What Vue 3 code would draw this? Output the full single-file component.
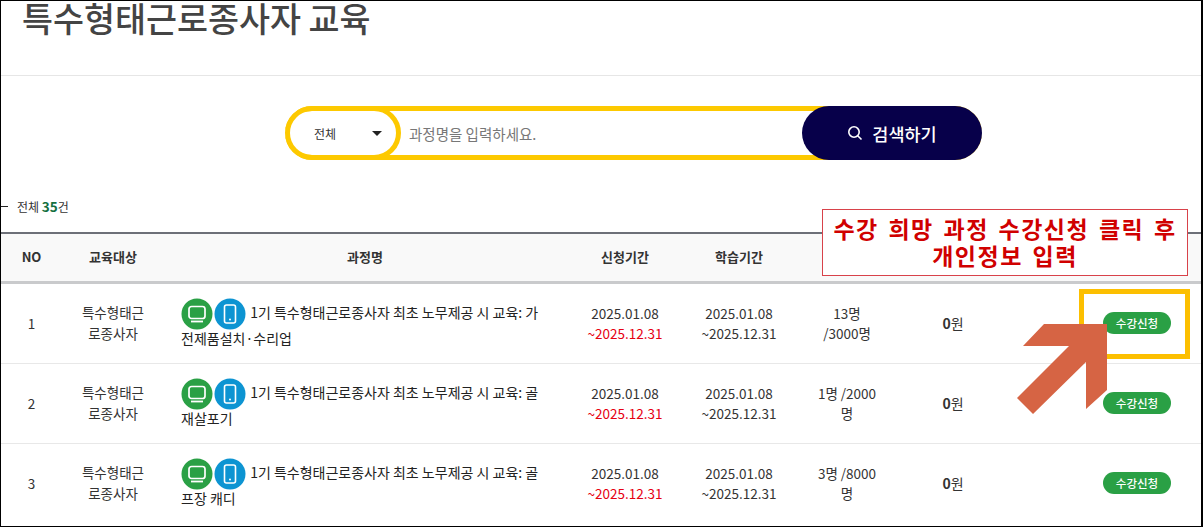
<script setup>
const rows = [
  { no: 1, title: '1기 특수형태근로종사자 최초 노무제공 시 교육: 가전제품설치·수리업', people: ['13명', '/3000명'] },
  { no: 2, title: '1기 특수형태근로종사자 최초 노무제공 시 교육: 골재살포기', people: ['1명 /2000', '명'] },
  { no: 3, title: '1기 특수형태근로종사자 최초 노무제공 시 교육: 골프장 캐디', people: ['3명 /8000', '명'] }
]
</script>

<template>
  <div class="page">
    <header class="head"><h1>특수형태근로종사자 교육</h1></header>

    <div class="search">
      <div class="bar">
        <div class="select"><span>전체</span><i class="caret"></i></div>
        <span class="ph">과정명을 입력하세요.</span>
        <div class="btn">
          <svg width="16" height="16" viewBox="0 0 16 16" fill="none" stroke="#fff" stroke-width="1.6"><circle cx="7" cy="7" r="5.2"/><path d="M10.7 10.7 14.5 14.5"/></svg>
          <span>검색하기</span>
        </div>
      </div>
    </div>

    <div class="count"><i class="dash"></i><span>전체 <b>35</b>건</span></div>

    <div class="table">
      <div class="row th">
        <div>NO</div><div>교육대상</div><div>과정명</div><div>신청기간</div><div>학습기간</div><div></div><div></div><div></div>
      </div>
      <div v-for="r in rows" :key="r.no" class="row td">
        <div>{{ r.no }}</div>
        <div class="target">특수형태근로종사자</div>
        <div class="title">
          <svg class="ico" width="32" height="32" viewBox="0 0 32 32"><circle cx="16" cy="16" r="15.5" fill="#2aa045"/><rect x="8" y="8.5" width="16" height="12" rx="2.5" fill="none" stroke="#fff" stroke-width="1.7"/><path d="M10 23.5h12" stroke="#fff" stroke-width="1.8"/></svg>
          <svg class="ico" width="32" height="32" viewBox="0 0 32 32"><circle cx="16" cy="16" r="15.5" fill="#0d94d2"/><rect x="10.5" y="7" width="11" height="18" rx="2" fill="none" stroke="#fff" stroke-width="1.6"/><circle cx="16" cy="21.6" r="1" fill="#fff"/></svg>
          {{ r.title }}
        </div>
        <div>2025.01.08<br><span class="red">~2025.12.31</span></div>
        <div>2025.01.08<br>~2025.12.31</div>
        <div class="people">{{ r.people[0] }}<br>{{ r.people[1] }}</div>
        <div class="fee"><b>0</b>원</div>
        <div class="apply"><span class="pill">수강신청</span></div>
      </div>
    </div>

    <div class="note">수강 희망 과정 수강신청 클릭 후<br>개인정보 입력</div>
    <div class="mark"></div>
    <svg class="arrow" width="90" height="90" viewBox="0 0 90 90"><path d="M27 0H90V66L69 85V38L16 90 0 74 52 22H6Z" fill="#d66444"/></svg>
  </div>
</template>

<style>
html, body { margin: 0; background: #fff; }
</style>

<style scoped>
.page {
  position: relative;
  box-sizing: border-box;
  width: 1203px;
  height: 527px;
  overflow: hidden;
  background: #fff;
  border: solid #000;
  border-width: 1px 2px 1px 1px;
  font-family: "Noto Sans CJK KR", "Noto Sans", sans-serif;
  color: #333;
}
.head {
  height: 74px;
  border-bottom: 1px solid #e6e6e6;
  padding-left: 21px;
}
h1 {
  margin: 0;
  font-size: 33.7px;
  line-height: 34px;
  font-weight: 500;
  color: #444;
}
.search { display: flex; padding: 30px 0 0 284px; height: 60px; }
.bar {
  box-sizing: border-box;
  position: relative;
  display: flex;
  align-items: center;
  width: 697px;
  height: 54px;
  border: 5px solid #fdc900;
  border-left: 0;
  border-right: 0;
  border-radius: 27px;
}
.select {
  box-sizing: border-box;
  display: flex;
  align-items: center;
  justify-content: space-between;
  flex: none;
  width: 116px;
  height: 54px;
  margin: -5px 0;
  padding: 0 14px 0 24px;
  font-size: 12px;
  color: #333;
  border: 5px solid #fdc900;
  border-radius: 27px;
}
.caret {
  width: 0; height: 0;
  border: 5px solid transparent;
  border-top: 5px solid #222;
  border-bottom: 0;
}
.ph { margin-left: 8px; font-size: 14.5px; color: #777; }
.btn {
  position: absolute;
  right: 0;
  top: -5px;
  box-sizing: border-box;
  display: flex;
  align-items: center;
  justify-content: center;
  gap: 9px;
  width: 180px;
  height: 54px;
  border-radius: 27px;
  background: #07004a;
  color: #fff;
  font-size: 17.5px;
  font-weight: 500;
}
.count {
  display: flex;
  align-items: center;
  gap: 9px;
  height: 20px;
  margin-top: 30px;
  font-size: 12px;
  color: #333;
}
.count b { font-size: 13.5px; color: #14703f; font-weight: 700; }
.dash { width: 7px; height: 1px; background: #222; }
.table { margin-top: 16px; border-top: 2px solid #6d7078; }
.row {
  display: grid;
  grid-template-columns: 61px 102px 402px 118px 110px 118px 82px 208px;
  align-items: center;
  text-align: center;
}
.th {
  height: 44px;
  padding-bottom: 3px;
  background: #f9f9f9;
  border-bottom: 3px solid #c9cacc;
  font-size: 13px;
  font-weight: 700;
  color: #333;
}
.td {
  height: 77px;
  padding-bottom: 2px;
  border-bottom: 1px solid #e8e8e8;
  font-size: 13.5px;
  line-height: 20px;
  color: #333;
}
.td:last-child { border-bottom: 0; }
.target { padding: 0 16px; line-height: 21px; word-break: break-all; }
.title {
  text-align: left;
  padding: 4px 20px 0 17px;
  font-size: 14px;
  line-height: 25px;
  word-break: break-all;
  color: #222;
}
.ico { vertical-align: -8px; margin: 0 1px -4px 0; }
.red { color: #e60012; }
.people { padding-right: 12px; }
.fee { font-size: 14px; }
.apply { display: flex; justify-content: flex-end; padding-right: 31px; }
.pill {
  box-sizing: border-box;
  width: 68px;
  height: 22px;
  line-height: 22px;
  border-radius: 11px;
  background: #2aa045;
  color: #fff;
  font-size: 11.5px;
  font-weight: 500;
  text-align: center;
}
.note {
  position: absolute;
  left: 821px;
  top: 208px;
  box-sizing: border-box;
  width: 366px;
  height: 67px;
  padding-top: 5px;
  background: #fff;
  border: 1px solid #d8424a;
  color: #d00000;
  font-size: 23px;
  line-height: 27px;
  font-weight: 700;
  letter-spacing: 1.5px;
  word-spacing: 3px;
  text-align: center;
}
.mark {
  position: absolute;
  left: 1078px;
  top: 288px;
  box-sizing: border-box;
  width: 111px;
  height: 70px;
  border: 5px solid #fcbf00;
}
.arrow { position: absolute; left: 1016px; top: 323px; }
</style>
